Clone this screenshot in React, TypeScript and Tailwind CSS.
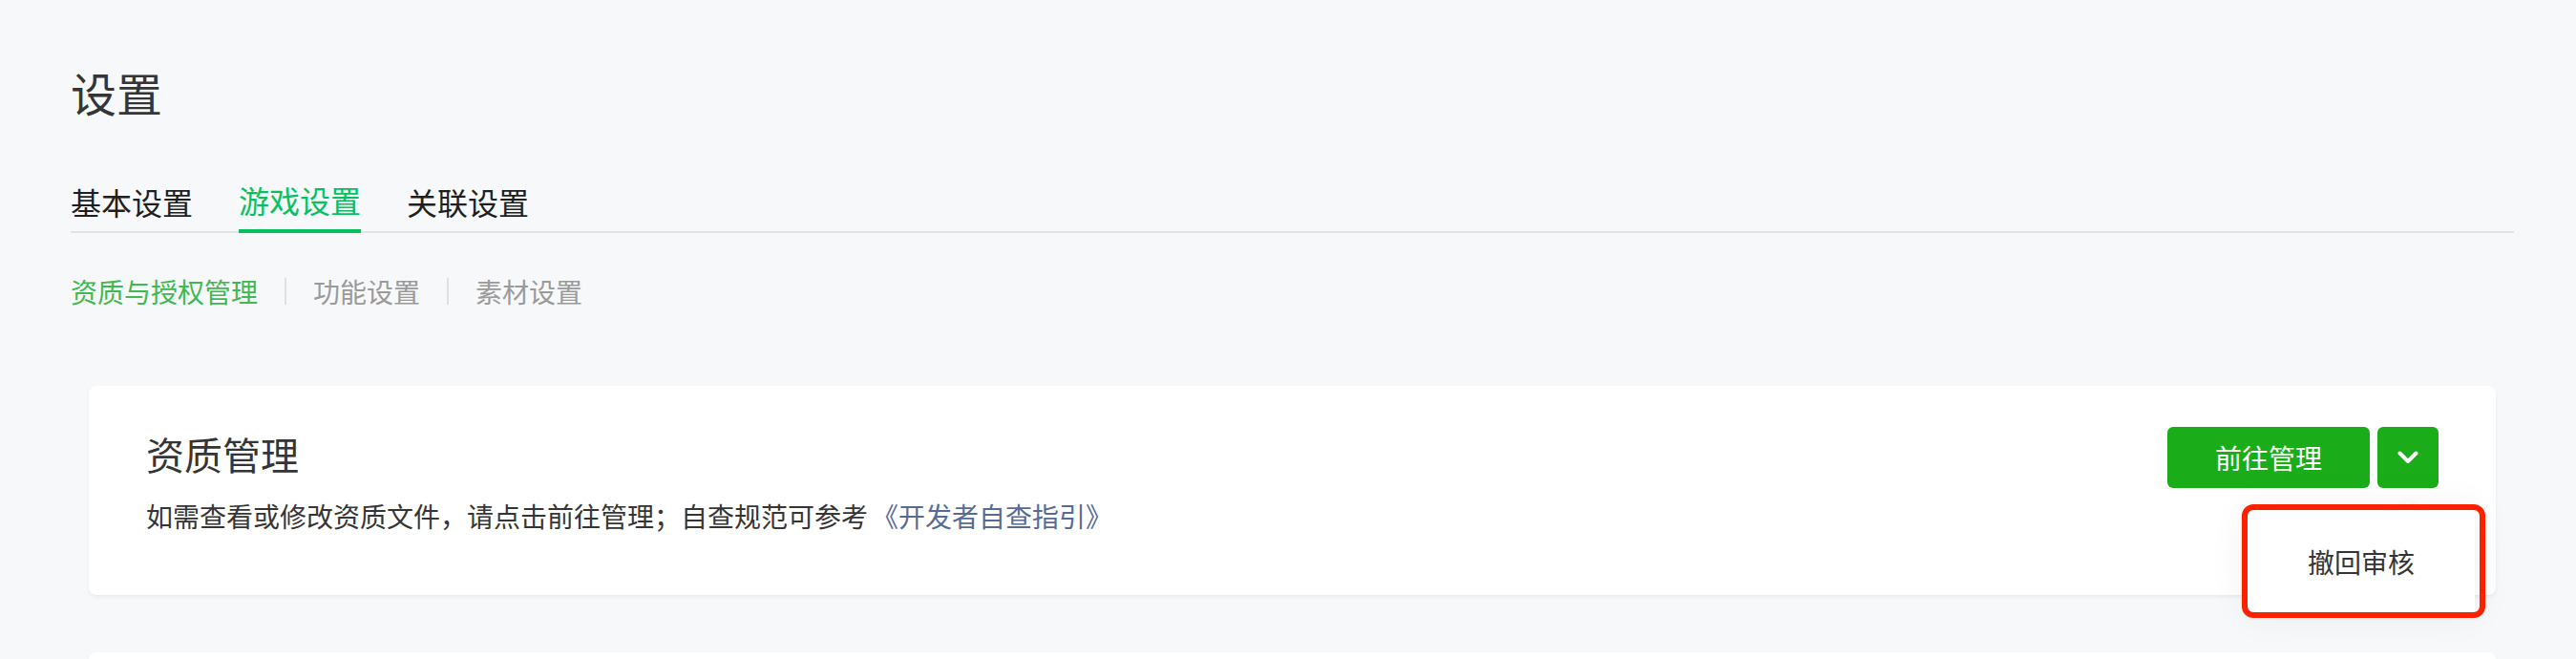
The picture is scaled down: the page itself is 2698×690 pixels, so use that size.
const font = { fontFamily: '"Noto Sans CJK SC", "Noto Sans", sans-serif' };

export default function App() {
  return (
    <div className="min-h-screen w-full overflow-hidden bg-[#f7f8fa] pl-[74px] pr-[65px] pt-[64px] text-[#353535]" style={font}>
      <h1 className="text-[48px] leading-[64px] font-normal text-[#353535]">设置</h1>

      <div className="mt-[59px] flex items-end gap-[48px] border-b-2 border-[#e1e3e6]">
        <button type="button" className="pb-[9px] text-[32px] leading-[44px] text-[#1f1f1f]">基本设置</button>
        <button
          type="button"
          className="-mb-[2px] border-b-4 border-[#07c160] pb-[9px] text-[32px] leading-[44px] text-[#07c160]"
        >
          游戏设置
        </button>
        <button type="button" className="pb-[9px] text-[32px] leading-[44px] text-[#1f1f1f]">关联设置</button>
      </div>

      <div className="mt-[41px] flex items-center text-[28px] leading-[40px]">
        <span className="text-[#3fb950]">资质与授权管理</span>
        <span className="mx-[28px] h-[28px] w-[2px] bg-[#e0e0e0]" />
        <span className="text-[#9a9a9a]">功能设置</span>
        <span className="mx-[28px] h-[28px] w-[2px] bg-[#e0e0e0]" />
        <span className="text-[#9a9a9a]">素材设置</span>
      </div>

      <div className="mx-[19px] mt-[79px] flex items-start justify-between rounded-[8px] bg-white px-[60px] pt-[43px] pb-[63px] shadow-[0_2px_4px_rgba(0,0,0,0.06)]">
        <div>
          <h3 className="text-[40px] leading-[56px] font-normal text-[#353535]">资质管理</h3>
          <p className="mt-[17px] text-[28px] leading-[40px] text-[#353535]">
            如需查看或修改资质文件，请点击前往管理；自查规范可参考
            <a className="ml-[4px] text-[#576b95]">《开发者自查指引》</a>
          </p>
        </div>

        <div className="relative flex gap-[8px]">
          <button
            type="button"
            className="h-[64px] w-[212px] rounded-[6px] bg-[#1aad19] text-[28px] leading-[40px] text-white"
          >
            前往管理
          </button>
          <button
            type="button"
            className="flex h-[64px] w-[64px] items-center justify-center rounded-[6px] bg-[#1aad19] text-white"
          >
            <svg width="22" height="14" viewBox="0 0 22 14" fill="none">
              <polyline points="2.5,2.5 11,11 19.5,2.5" stroke="currentColor" strokeWidth="4" strokeLinecap="round" strokeLinejoin="round" />
            </svg>
          </button>

          {/* dropdown menu */}
          <div className="absolute left-[244px] top-[81px] h-[16px] w-[16px] rotate-45 bg-white shadow-[0_0_10px_rgba(0,0,0,0.06)]" />
          <div className="absolute left-[84px] top-[88px] flex h-[106px] w-[238px] items-center justify-center rounded-[4px] bg-white text-[28px] leading-[40px] text-[#353535] shadow-[0_0_40px_rgba(0,0,0,0.08)]">
            撤回审核
          </div>
          <div className="pointer-events-none absolute left-[78px] top-[81px] h-[119px] w-[255px] rounded-[12px] border-[6px] border-[#ff2000]" />
        </div>
      </div>

      <div className="mx-[19px] mt-[60px] h-[200px] rounded-[8px] bg-white shadow-[0_2px_4px_rgba(0,0,0,0.06)]" />
    </div>
  );
}
